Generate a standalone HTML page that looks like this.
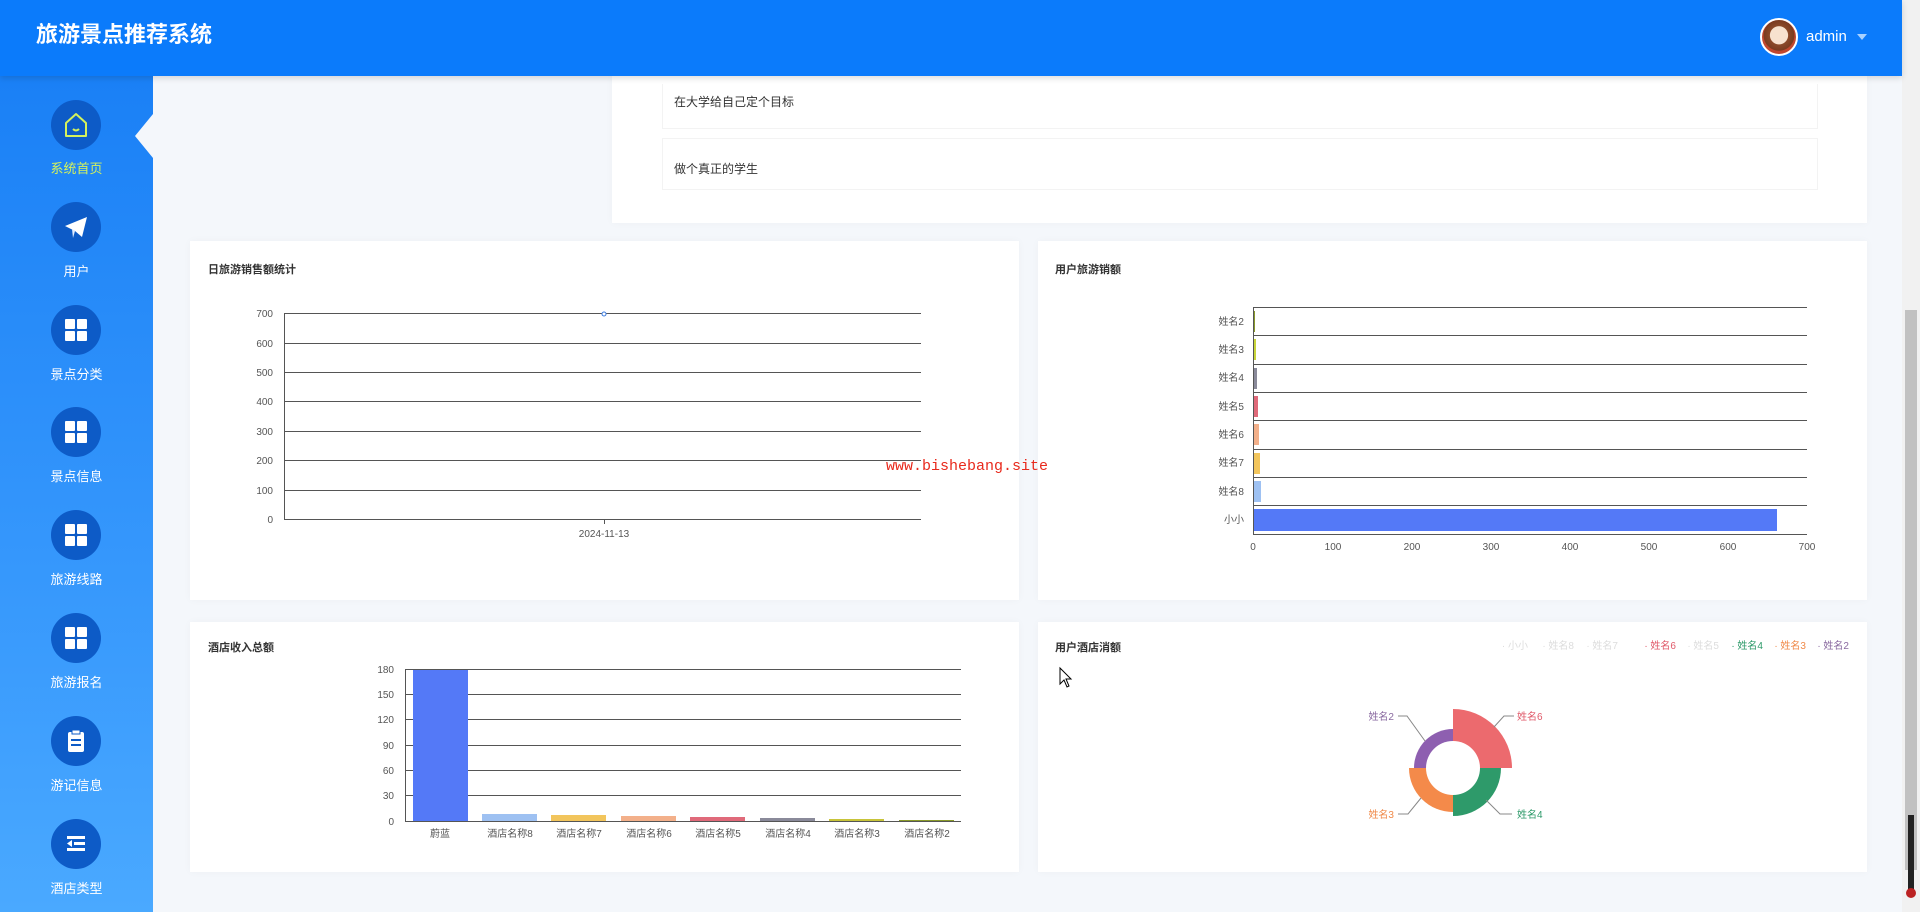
<!DOCTYPE html>
<html><head><meta charset="utf-8"><style>
*{margin:0;padding:0;box-sizing:border-box}
body{width:1920px;height:912px;overflow:hidden;background:#f4f7fb;font-family:"Liberation Sans","Noto Sans CJK SC",sans-serif;position:relative}
.hdr{position:absolute;left:0;top:0;width:1902px;height:76px;background:#0b7bfb;box-shadow:0 2px 6px rgba(0,0,0,.15);z-index:3}
.hdr h1{position:absolute;left:36px;top:17px;color:#fff;font-size:22px;font-weight:bold}
.side{position:absolute;left:0;top:76px;width:153px;height:836px;background:linear-gradient(#1a80f6,#3b9cfd 70%,#4aa9ff)}
.ic{position:absolute;left:51px;width:50px;height:50px;border-radius:50%;background:#0d5bc7;display:flex;align-items:center;justify-content:center}
.lb{position:absolute;left:0;width:153px;text-align:center;color:#fff;font-size:13px}
.card{position:absolute;background:#fff;box-shadow:0 0 8px rgba(0,0,0,.03)}
.sb{position:absolute;left:1902px;top:0;width:18px;height:912px;background:#f1f1f1}
</style></head><body>
<div class="hdr"><h1>旅游景点推荐系统</h1>
<div style="position:absolute;left:1760px;top:18px;width:38px;height:38px;border-radius:50%;background:radial-gradient(circle at 50% 45%,#f7e2cf 35%,#8b4a2a 37%,#7a3b20 60%,#c2472f 62%);border:2px solid #fff"></div>
<div style="position:absolute;left:1806px;top:28px;color:#fff;font-size:15px">admin</div>
<div style="position:absolute;left:1857px;top:34px;border-left:5px solid transparent;border-right:5px solid transparent;border-top:6px solid #a9d2ff"></div>
</div>
<div class="sb"><div style="position:absolute;left:3px;top:310px;width:12px;height:560px;background:#c1c1c1"></div><div style="position:absolute;left:6px;top:815px;width:6px;height:80px;background:#222"></div><div style="position:absolute;left:4px;top:888px;width:10px;height:10px;border-radius:50%;background:#b22"></div></div>
<div class="side">
<div style="position:absolute;left:135px;top:38px;width:0;height:0;border-top:22px solid transparent;border-bottom:22px solid transparent;border-right:18px solid #f4f7fb"></div>
<div class="ic" style="top:24px"><svg width="30" height="30" viewBox="0 0 30 30"><path d="M5 13 L15 4 L25 13 V26 H5 Z" fill="none" stroke="#d4f25c" stroke-width="2" stroke-linejoin="round"/><path d="M12 19 Q15 22 18 19" fill="none" stroke="#d4f25c" stroke-width="2"/></svg></div>
<div class="lb" style="top:82px;color:#d4f25c">系统首页</div>
<div class="ic" style="top:126px"><svg width="30" height="30" viewBox="0 0 30 30"><path d="M4 14 L26 5 L21 25 L14 19 Z" fill="#fff"/><path d="M14 19 L12 26 L11 17 Z" fill="#e0ecff"/></svg></div>
<div class="lb" style="top:185px">用户</div>
<div class="ic" style="top:229px"><svg width="26" height="26"><rect x="2" y="2" width="10" height="10" rx="1" fill="#fff"/><rect x="14" y="2" width="10" height="10" rx="1" fill="#fff"/><rect x="2" y="14" width="10" height="10" rx="1" fill="#fff"/><rect x="14" y="14" width="10" height="10" rx="1" fill="#fff"/></svg></div>
<div class="lb" style="top:288px">景点分类</div>
<div class="ic" style="top:331px"><svg width="26" height="26"><rect x="2" y="2" width="10" height="10" rx="1" fill="#fff"/><rect x="14" y="2" width="10" height="10" rx="1" fill="#fff"/><rect x="2" y="14" width="10" height="10" rx="1" fill="#fff"/><rect x="14" y="14" width="10" height="10" rx="1" fill="#fff"/></svg></div>
<div class="lb" style="top:390px">景点信息</div>
<div class="ic" style="top:434px"><svg width="26" height="26"><rect x="2" y="2" width="10" height="10" rx="1" fill="#fff"/><rect x="14" y="2" width="10" height="10" rx="1" fill="#fff"/><rect x="2" y="14" width="10" height="10" rx="1" fill="#fff"/><rect x="14" y="14" width="10" height="10" rx="1" fill="#fff"/></svg></div>
<div class="lb" style="top:493px">旅游线路</div>
<div class="ic" style="top:537px"><svg width="26" height="26"><rect x="2" y="2" width="10" height="10" rx="1" fill="#fff"/><rect x="14" y="2" width="10" height="10" rx="1" fill="#fff"/><rect x="2" y="14" width="10" height="10" rx="1" fill="#fff"/><rect x="14" y="14" width="10" height="10" rx="1" fill="#fff"/></svg></div>
<div class="lb" style="top:596px">旅游报名</div>
<div class="ic" style="top:640px"><svg width="26" height="26"><rect x="5" y="4" width="16" height="20" rx="2" fill="#fff"/><rect x="9" y="2" width="8" height="4" fill="#fff" stroke="#0d5bc7"/><rect x="8" y="11" width="10" height="2" fill="#0d5bc7"/><rect x="8" y="16" width="10" height="2" fill="#0d5bc7"/></svg></div>
<div class="lb" style="top:699px">游记信息</div>
<div class="ic" style="top:743px"><svg width="26" height="26"><rect x="4" y="5" width="18" height="3" fill="#fff"/><rect x="11" y="11" width="11" height="3" fill="#fff"/><rect x="4" y="17" width="18" height="3" fill="#fff"/><path d="M9 9 L4 12.5 L9 16 Z" fill="#fff"/></svg></div>
<div class="lb" style="top:802px">酒店类型</div>
</div>

<div class="card" style="left:612px;top:76px;width:1255px;height:147px">
<div style="position:absolute;left:50px;top:8px;width:1156px;height:45px;border:1px solid #f3f3f3;border-top:none"></div>
<div style="position:absolute;left:62px;top:17px;font-size:12px;color:#333">在大学给自己定个目标</div>
<div style="position:absolute;left:50px;top:62px;width:1156px;height:52px;border:1px solid #f3f3f3"></div>
<div style="position:absolute;left:62px;top:84px;font-size:12px;color:#333">做个真正的学生</div>
</div>

<div class="card" style="left:190px;top:241px;width:829px;height:359px"></div>
<div class="card" style="left:1038px;top:241px;width:829px;height:359px"></div>
<div class="card" style="left:190px;top:622px;width:829px;height:250px"></div>
<div class="card" style="left:1038px;top:622px;width:829px;height:250px"></div>

<svg style="position:absolute;left:0;top:0" width="1902" height="912" font-family="Liberation Sans,Noto Sans CJK SC,sans-serif" font-size="10" fill="#555">
<text x="208" y="273" font-size="11" font-weight="bold" fill="#333">日旅游销售额统计</text>
<g stroke="#555" stroke-width="1">
<line x1="284" y1="313.5" x2="921" y2="313.5"/><line x1="284" y1="343.5" x2="921" y2="343.5"/><line x1="284" y1="372.5" x2="921" y2="372.5"/><line x1="284" y1="401.5" x2="921" y2="401.5"/><line x1="284" y1="431.5" x2="921" y2="431.5"/><line x1="284" y1="460.5" x2="921" y2="460.5"/><line x1="284" y1="490.5" x2="921" y2="490.5"/><line x1="284" y1="519.5" x2="921" y2="519.5"/><line x1="284.5" y1="313" x2="284.5" y2="520"/><line x1="604.5" y1="519" x2="604.5" y2="524"/></g>
<g text-anchor="end"><text x="273" y="317">700</text><text x="273" y="347">600</text><text x="273" y="376">500</text><text x="273" y="405">400</text><text x="273" y="435">300</text><text x="273" y="464">200</text><text x="273" y="494">100</text><text x="273" y="523">0</text></g>
<text x="604" y="537" text-anchor="middle">2024-11-13</text>
<circle cx="604" cy="314" r="2" fill="#fff" stroke="#3a7be0"/>

<text x="1055" y="273" font-size="11" font-weight="bold" fill="#333">用户旅游销额</text>
<g stroke="#555"><line x1="1253" y1="307.5" x2="1807" y2="307.5"/><line x1="1253" y1="335.5" x2="1807" y2="335.5"/><line x1="1253" y1="364.5" x2="1807" y2="364.5"/><line x1="1253" y1="392.5" x2="1807" y2="392.5"/><line x1="1253" y1="420.5" x2="1807" y2="420.5"/><line x1="1253" y1="449.5" x2="1807" y2="449.5"/><line x1="1253" y1="477.5" x2="1807" y2="477.5"/><line x1="1253" y1="505.5" x2="1807" y2="505.5"/><line x1="1253" y1="534.5" x2="1807" y2="534.5"/><line x1="1253.5" y1="307" x2="1253.5" y2="534"/></g>
<rect x="1254" y="311" width="1" height="21" fill="#8a9a2a"/><rect x="1254" y="339" width="2" height="21" fill="#c8d43a"/><rect x="1254" y="368" width="3" height="21" fill="#8a8a9a"/><rect x="1254" y="396" width="4" height="21" fill="#e06a7a"/><rect x="1254" y="424" width="5" height="21" fill="#f3b08a"/><rect x="1254" y="453" width="6" height="21" fill="#f2c55c"/><rect x="1254" y="481" width="7" height="21" fill="#9ec1f2"/><rect x="1254" y="509" width="523" height="22" fill="#5479f7"/>
<g text-anchor="end"><text x="1244" y="325">姓名2</text><text x="1244" y="353">姓名3</text><text x="1244" y="381">姓名4</text><text x="1244" y="410">姓名5</text><text x="1244" y="438">姓名6</text><text x="1244" y="466">姓名7</text><text x="1244" y="495">姓名8</text><text x="1244" y="523">小小</text></g>
<g text-anchor="middle"><text x="1253" y="550">0</text><text x="1333" y="550">100</text><text x="1412" y="550">200</text><text x="1491" y="550">300</text><text x="1570" y="550">400</text><text x="1649" y="550">500</text><text x="1728" y="550">600</text><text x="1807" y="550">700</text></g>
<text x="967" y="470" text-anchor="middle" font-family="Liberation Mono,monospace" font-size="15" fill="#e8291c">www.bishebang.site</text>

<text x="208" y="651" font-size="11" font-weight="bold" fill="#333">酒店收入总额</text>
<g stroke="#555"><line x1="405" y1="669.5" x2="961" y2="669.5"/><line x1="405" y1="694.5" x2="961" y2="694.5"/><line x1="405" y1="719.5" x2="961" y2="719.5"/><line x1="405" y1="745.5" x2="961" y2="745.5"/><line x1="405" y1="770.5" x2="961" y2="770.5"/><line x1="405" y1="795.5" x2="961" y2="795.5"/><line x1="405" y1="821.5" x2="961" y2="821.5"/><line x1="405.5" y1="669" x2="405.5" y2="821"/></g>
<g text-anchor="end"><text x="394" y="673">180</text><text x="394" y="698">150</text><text x="394" y="723">120</text><text x="394" y="749">90</text><text x="394" y="774">60</text><text x="394" y="799">30</text><text x="394" y="825">0</text></g>
<rect x="413" y="670" width="55" height="151" fill="#5479f7"/><rect x="482" y="814" width="55" height="7" fill="#9ec1f2"/><rect x="551" y="815" width="55" height="6" fill="#f2c55c"/><rect x="621" y="816" width="55" height="5" fill="#f3b08a"/><rect x="690" y="817" width="55" height="4" fill="#e06a7a"/><rect x="760" y="818" width="55" height="3" fill="#8a8a9a"/><rect x="829" y="819" width="55" height="2" fill="#c8c43a"/><rect x="899" y="820" width="55" height="1" fill="#8a9a2a"/>
<g text-anchor="middle"><text x="440" y="837">蔚蓝</text><text x="510" y="837">酒店名称8</text><text x="579" y="837">酒店名称7</text><text x="649" y="837">酒店名称6</text><text x="718" y="837">酒店名称5</text><text x="788" y="837">酒店名称4</text><text x="857" y="837">酒店名称3</text><text x="927" y="837">酒店名称2</text></g>

<text x="1055" y="651" font-size="11" font-weight="bold" fill="#333">用户酒店消额</text>
<g font-size="10" text-anchor="end"><text x="1528" y="649" fill="#ddd">· 小小</text><text x="1574" y="649" fill="#ddd">· 姓名8</text><text x="1618" y="649" fill="#ddd">· 姓名7</text><text x="1676" y="649" fill="#e05a6a">· 姓名6</text><text x="1719" y="649" fill="#ddd">· 姓名5</text><text x="1763" y="649" fill="#2e9a6a">· 姓名4</text><text x="1806" y="649" fill="#f08a4a">· 姓名3</text><text x="1849" y="649" fill="#8a6aa0">· 姓名2</text></g>
<path d="M1453 768 V709 A59 59 0 0 1 1512 768 Z" fill="#ec6a6e"/>
<path d="M1453 768 H1501 A48 48 0 0 1 1453 816 Z" fill="#2e9a6a"/>
<path d="M1453 768 V812 A44 44 0 0 1 1409 768 Z" fill="#f48a4a"/>
<path d="M1453 768 H1414 A39 39 0 0 1 1453 729 Z" fill="#8e5fb0"/>
<circle cx="1453" cy="768" r="27" fill="#fff"/>
<g fill="none" stroke="#888"><path d="M1494 727 L1504 716 H1514"/><path d="M1486 800 L1500 814 H1512"/><path d="M1421 798 L1408 814 H1398"/><path d="M1425 741 L1407 716 H1398"/></g>
<text x="1517" y="720" fill="#e05a6a">姓名6</text><text x="1517" y="818" fill="#2e9a6a">姓名4</text><text x="1394" y="818" text-anchor="end" fill="#f08a4a">姓名3</text><text x="1394" y="720" text-anchor="end" fill="#8a6aa0">姓名2</text>
<path d="M1060 668 V684 L1064 680 L1067 687 L1069 686 L1066 679 L1071 679 Z" fill="#fff" stroke="#000" stroke-width="1"/>
</svg>
</body></html>
